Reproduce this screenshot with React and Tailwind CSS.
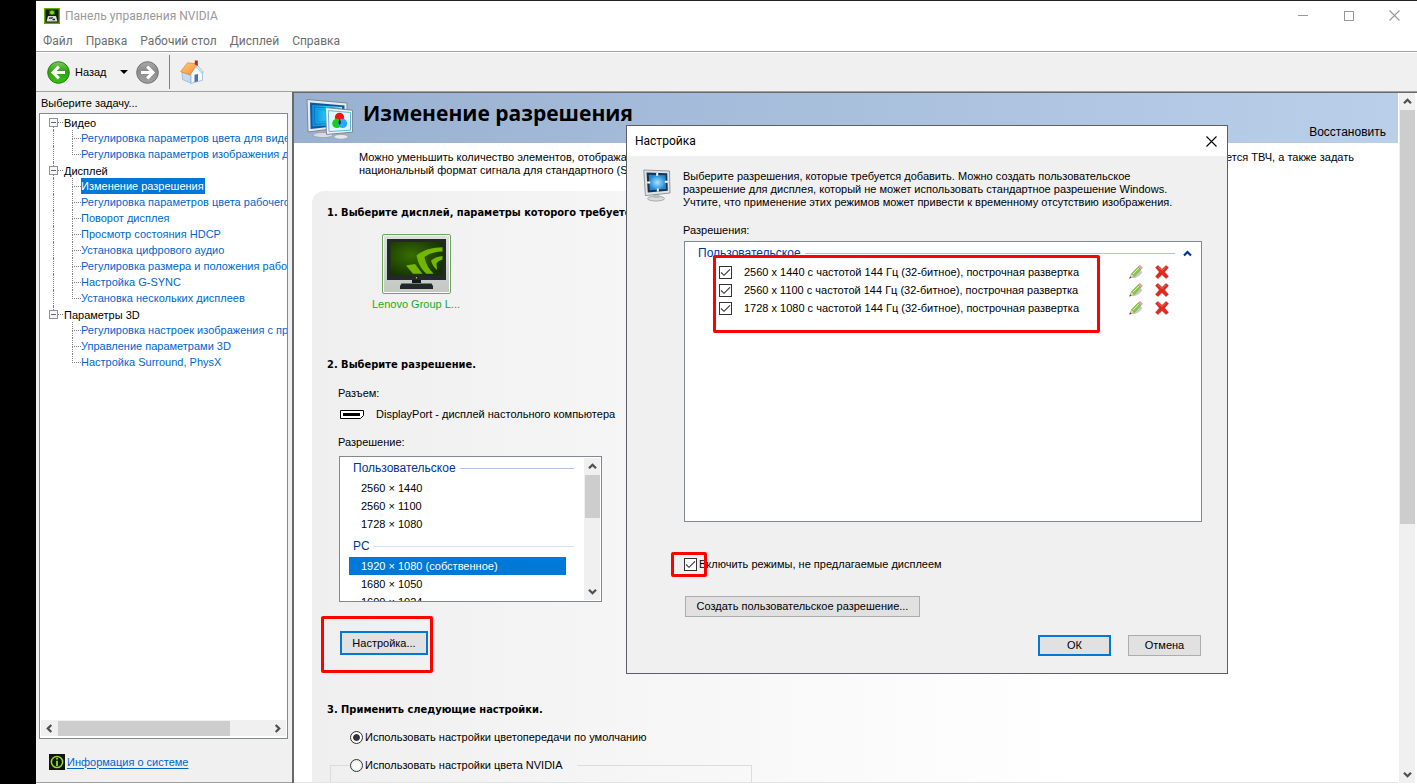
import React from "react";

const ui = "font-['Liberation_Sans',Arial,sans-serif]";
const bold = "font-['DejaVu_Sans_Condensed','DejaVu_Sans',sans-serif] font-bold";
const chrome = "font-['Roboto','Liberation_Sans',sans-serif]";

const tree = [
  {
    name: "Видео",
    items: ["Регулировка параметров цвета для видео", "Регулировка параметров изображения для видео"],
  },
  {
    name: "Дисплей",
    items: [
      "Изменение разрешения",
      "Регулировка параметров цвета рабочего стола",
      "Поворот дисплея",
      "Просмотр состояния HDCP",
      "Установка цифрового аудио",
      "Регулировка размера и положения рабочего стола",
      "Настройка G-SYNC",
      "Установка нескольких дисплеев",
    ],
  },
  {
    name: "Параметры 3D",
    items: [
      "Регулировка настроек изображения с просмотром",
      "Управление параметрами 3D",
      "Настройка Surround, PhysX",
    ],
  },
];

const modes = [
  "2560 x 1440 с частотой 144 Гц (32-битное), построчная развертка",
  "2560 x 1100 с частотой 144 Гц (32-битное), построчная развертка",
  "1728 x 1080 с частотой 144 Гц (32-битное), построчная развертка",
];

function Chevron({ className = "" }) {
  return (
    <svg viewBox="0 0 9 9" className={"size-[9px] " + className} fill="none" stroke="#505050" strokeWidth="2.3">
      <path d="M1 6.3 4.5 2.8 8 6.3" />
    </svg>
  );
}

function CloseIcon({ color }) {
  return (
    <svg viewBox="0 0 11 11" className="size-[11px]" stroke={color} strokeWidth="1.1">
      <path d="M.5.5l10 10M10.5.5l-10 10" />
    </svg>
  );
}

function AppIcon() {
  return (
    <svg viewBox="0 0 16 16" className="size-4 shrink-0">
      <rect x=".7" y=".7" width="14.6" height="14.6" fill="#161a12" stroke="#5fae00" strokeWidth="1.4" />
      <path d="M5 2.5h6v4.2H5z" fill="#2f6a08" />
      <circle cx="8" cy="4.400" r="2" fill="#7be01a" />
      <path d="M4 8h8l1.500 5.500h-11z" fill="#d8dcd8" />
      <path d="M5 10.200h2.500l1-1M8.500 11.500H11" fill="none" stroke="#222" strokeWidth="1.300" />
    </svg>
  );
}

function RoundArrow({ back }) {
  const id = back ? "arrowGreen" : "arrowGray";
  return (
    <svg viewBox="0 0 23 23" className="size-[23px]">
      <defs>
        <linearGradient id={id} x1="0" y1="0" x2="0" y2="1">
          <stop offset="0" stopColor={back ? "#7ccb5e" : "#a9a9a9"} />
          <stop offset=".45" stopColor={back ? "#2fa014" : "#8b8b8b"} />
          <stop offset="1" stopColor={back ? "#39c30f" : "#a3a3a3"} />
        </linearGradient>
      </defs>
      <circle cx="11.5" cy="11.5" r="10.8" fill={`url(#${id})`} stroke={back ? "#1f8210" : "#707070"} strokeWidth="1" />
      {back ? (
        <path d="M18 11.5H7M11.8 5.6 6 11.500 11.8 17.400" fill="none" stroke="#fff" strokeWidth="3" />
      ) : (
        <path d="M5 11.500h11M11.200 5.600l5.800 5.900-5.800 5.900" fill="none" stroke="#fff" strokeWidth="3" />
      )}
    </svg>
  );
}

function House() {
  return (
    <svg viewBox="0 0 24 24" className="size-6">
      <defs>
        <linearGradient id="roof" x1="0" y1="0" x2="1" y2="1">
          <stop offset="0" stopColor="#ffd08a" />
          <stop offset="1" stopColor="#f28c22" />
        </linearGradient>
      </defs>
      <path d="M2 12 11 14v9.200L2.500 19.500z" fill="#c3dcf3" stroke="#8fb0d2" strokeWidth=".7" />
      <path d="M11 13.500 17 5.500l5.500 7.500v7.300L11 23.300z" fill="#f3f8fd" stroke="#94aeca" strokeWidth=".7" />
      <path d="M14.500 14.800l3.500-.9v7.300l-3.500 1z" fill="#4a70b5" />
      <path d="M16.500 4 23.400 12.200 22 13.300 16.600 7.300z" fill="#dbe9f6" stroke="#8ca8c6" strokeWidth=".6" />
      <path d="M7.500 2.800 16.800 3.800 10 15 .6 11.600z" fill="url(#roof)" stroke="#dd8426" strokeWidth=".7" />
      <path d="M14.800.4h3V6l-3-1.800z" fill="#b8281c" />
    </svg>
  );
}

function ResolutionIcon() {
  return (
    <svg viewBox="0 0 48 42" className="h-[42px] w-12 shrink-0">
      <defs>
        <linearGradient id="scr" x1="0" y1="0" x2="1" y2="0">
          <stop offset="0" stopColor="#1287da" />
          <stop offset=".5" stopColor="#22cdf4" />
          <stop offset="1" stopColor="#8ff0fc" />
        </linearGradient>
      </defs>
      <ellipse cx="17" cy="37" rx="10" ry="2.6" fill="#d5dbe0" stroke="#8f979e" strokeWidth=".6" />
      <path d="M1 1.500 41 5v24L2 34z" fill="#e6eaed" stroke="#7f8890" strokeWidth="1" />
      <path d="M4 4.500 38.500 7.400v19.800L4.600 31z" fill="#0b5a9e" />
      <path d="M6 7 36 9v17L6.400 28.600z" fill="url(#scr)" />
      <path d="M8.500 9 34 10.500v14L8.800 26.500z" fill="none" stroke="#0a78c4" strokeWidth="1" />
      <path d="M11.500 11.500 30 12.500v10.500L11.800 24z" fill="none" stroke="#0f9ade" strokeWidth="1" />
      <ellipse cx="35" cy="38.800" rx="7" ry="2.400" fill="#e3e7ea" stroke="#8f979e" strokeWidth=".6" />
      <path d="M19.500 9.600 46.500 12.200v22L20.500 36.400z" fill="#f0f3f5" stroke="#7f8890" strokeWidth="1" />
      <path d="M22.300 12.600 44.500 14.500v17.600L23 33.600z" fill="#e2f6fd" stroke="#59b9e0" strokeWidth="1" />
      <circle cx="33.500" cy="19.300" r="4.600" fill="#f31212" />
      <circle cx="30.800" cy="25.400" r="4.600" fill="#12d312" />
      <circle cx="36.600" cy="25.400" r="4.600" fill="#28a8ff" />
      <path d="M33.700 21.200c1.600 1.700 1.600 4.200 0 5.700-1.600-1.500-1.600-4 0-5.700z" fill="#222" />
    </svg>
  );
}

function MonitorIcon() {
  return (
    <svg viewBox="0 0 28 33" className="h-[33px] w-7">
      <defs>
        <radialGradient id="mon">
          <stop offset="0" stopColor="#a6e4ff" />
          <stop offset="1" stopColor="#2186d0" />
        </radialGradient>
      </defs>
      <ellipse cx="13" cy="29.600" rx="8.500" ry="2.400" fill="#d8dcdf" stroke="#969da2" strokeWidth=".8" />
      <path d="M10.500 24h6v5h-6z" fill="#b8bec2" />
      <path d="M.8 1 26.500 2 27 24 2.400 26.600z" fill="#dfe3e6" stroke="#899097" strokeWidth=".9" />
      <path d="M3.500 3.600 24.200 4.200 24.800 21.800 4.800 23.400z" fill="#17344f" />
      <path d="M5.800 5.800 22.600 6.200 23 20 6.800 21.200z" fill="url(#mon)" />
      <path d="M14.200 3.800v3M14.800 19.600v3M4.200 13.400h3M21.800 12.800h3" stroke="#fff" strokeWidth="2" />
    </svg>
  );
}

function DisplayThumb() {
  return (
    <svg viewBox="0 0 59 50" className="h-[50px] w-[59px]">
      <defs>
        <radialGradient id="green" cx=".4" cy=".4" r=".7">
          <stop offset="0" stopColor="#376e00" />
          <stop offset="1" stopColor="#143000" />
        </radialGradient>
        <clipPath id="screenClip">
          <path d="M3.500 3h52v33.500h-52z" />
        </clipPath>
      </defs>
      <path d="M25 40h9v4h-9z" fill="#14181a" />
      <path d="M14.500 44.500h30l1.500 2.500v3H13v-3z" fill="#23282b" />
      <rect width="59" height="41" fill="#23282b" />
      <rect x="3.500" y="3" width="52" height="33.500" fill="url(#green)" />
      <g clipPath="url(#screenClip)" fill="#74b600">
        <path d="M19 26.500 28 25l7.500 9.800h-9.500z" />
        <path d="M29.500 16.600C36 11 45 8.300 56 8.300v4.200c-8 .2-14 2-18.600 5.600 1.500 7 4.500 12.500 9.300 16.700h-7.400C33.800 30 31 24 29.500 16.600z" />
        <path d="M44 21.500c3.400-2.800 7.200-4.200 12-4.500v3.500c-3 .6-5 1.800-6.500 4l.5 6.500c-3.200-2.600-5-5.500-6-9.500z" />
      </g>
      <circle cx="29.500" cy="38.800" r=".7" fill="#e8e000" />
    </svg>
  );
}

function Pencil() {
  return (
    <svg viewBox="0 0 14 14" className="size-[14px]">
      <path d="M3 13c4 .5 8-2 10.500-6L11 5z" fill="#c9c9c9" />
      <path d="M2.600 8.600 9 2l2.800 2.600-6.500 6.800z" fill="#86cc48" stroke="#5b9a2c" strokeWidth=".5" />
      <path d="M3.600 9.400 10 3" stroke="#d2f2a8" strokeWidth="1" />
      <path d="M9 2 10.800.3l2.700 2.500-1.700 1.800z" fill="#f0a9a0" stroke="#b3776c" strokeWidth=".5" />
      <path d="M2.600 8.600 5.300 11.400.6 13.200z" fill="#f1d7a2" stroke="#9a8455" strokeWidth=".5" />
      <path d="M.4 13.400 1.200 11.400 2.400 12.600z" fill="#333" />
    </svg>
  );
}

function RedCross() {
  return (
    <svg viewBox="0 0 14 14" className="size-[14px]">
      <path
        d="M3 .6 7 4.400 11 .6l2.400 2L9.600 7l3.800 4.400-2.400 2L7 9.600l-4 3.800-2.400-2L4.400 7 .6 2.600z"
        fill="#e4281d"
        stroke="#b8211a"
        strokeWidth=".6"
      />
      <path d="M3 1.800 7 5.600l4-3.800" fill="none" stroke="#f4786c" strokeWidth=".7" />
    </svg>
  );
}

function Tick({ id }) {
  return (
    <span className="grid size-[13px] shrink-0">
      <input
        id={id}
        type="checkbox"
        defaultChecked
        className="peer col-start-1 row-start-1 size-[13px] appearance-none border border-[#333] bg-white"
      />
      <svg
        viewBox="0 0 13 13"
        className="pointer-events-none invisible col-start-1 row-start-1 size-[13px] peer-checked:visible"
        fill="none"
        stroke="#333"
        strokeWidth="1.1"
      >
        <path d="M2 6.500 5 9.300l6-6" />
      </svg>
    </span>
  );
}

function Radio({ id, checked }) {
  return (
    <input
      id={id}
      type="radio"
      name="color"
      defaultChecked={checked}
      className="size-[13px] shrink-0 appearance-none rounded-full border border-[#333] bg-white bg-clip-content p-0.5 checked:bg-[#333] checked:shadow-[inset_0_0_0_2px_white]"
    />
  );
}

function TreeGroup({ group, first, last }) {
  return (
    <li>
      <div className="flex h-4 pl-[9px]">
        <span className="flex w-[9px] shrink-0 flex-col items-center">
          <span className={"h-1 border-l border-dotted " + (first ? "border-transparent" : "border-[#808080]")} />
          <button
            type="button"
            aria-label={"Свернуть " + group.name}
            className="flex size-[9px] shrink-0 items-center justify-center border border-[#919191] bg-[#f7f7f7]"
          >
            <span className="h-px w-[5px] bg-[#4b63a7]" />
          </button>
          <span className={"h-[3px] border-l border-dotted " + (last ? "border-transparent" : "border-[#808080]")} />
        </span>
        <span className="h-[9px] w-[5px] shrink-0 border-b border-dotted border-[#808080]" />
        <span className="pl-px leading-[18px]">{group.name}</span>
      </div>
      <ul>
        {group.items.map((item, i) => (
          <li key={item} className="flex h-4 pl-[13px]">
            <span
              className={"w-[19px] shrink-0 border-l border-dotted " + (last ? "border-transparent" : "border-[#808080]")}
            />
            <span className="flex w-[9px] shrink-0 flex-col">
              <span className="h-[9px] border-b border-l border-dotted border-[#808080]" />
              {i < group.items.length - 1 && (
                <span className="h-[7px] border-l border-dotted border-[#808080]" />
              )}
            </span>
            <a
              href="#resolution"
              className={
                "leading-4 whitespace-nowrap " +
                (item === "Изменение разрешения" ? "bg-[#0078d7] pr-px text-white" : "text-[#0066cc]")
              }
            >
              {item}
            </a>
          </li>
        ))}
      </ul>
    </li>
  );
}

function Sidebar() {
  return (
    <aside className={"flex w-64 shrink-0 flex-col border-b border-[#a0a0a0] bg-[#f0f0f0] pr-1 pl-[3px] text-[11px] " + ui}>
      <p className="mt-px px-0.5 leading-5">Выберите задачу...</p>
      <div className="flex min-h-0 flex-1 flex-col border border-[#828790] bg-white">
        <ul className="min-h-0 flex-1 overflow-hidden">
          {tree.map((g, i) => (
            <TreeGroup key={g.name} group={g} first={i === 0} last={i === tree.length - 1} />
          ))}
        </ul>
        <div className="mx-px mb-0.5 flex h-4 items-center bg-[#f0f0f0]">
          <button type="button" aria-label="Прокрутить влево" className="flex w-[17px] justify-center">
            <Chevron className="-rotate-90" />
          </button>
          <span className="h-[15px] w-[172px] bg-[#cdcdcd]" />
          <button type="button" aria-label="Прокрутить вправо" className="ml-auto flex w-[17px] justify-center">
            <Chevron className="rotate-90" />
          </button>
        </div>
      </div>
      <div className="flex h-[43px] items-center gap-0.5 pt-[3px] pl-[10px]">
        <svg viewBox="0 0 16 16" className="size-4">
          <rect width="16" height="16" fill="#11150c" />
          <circle cx="8" cy="8" r="5.600" fill="none" stroke="#8fdc2c" strokeWidth="1.500" />
          <path d="M8 4v1.600M8 6.800V12" stroke="#8fdc2c" strokeWidth="1.800" />
        </svg>
        <a href="#info" className="text-[#0066cc] underline underline-offset-2">
          Информация о системе
        </a>
      </div>
    </aside>
  );
}

function GroupTitle({ children, line }) {
  return (
    <div className="flex items-center gap-1 text-xs leading-4 text-[#003399]">
      {children}
      <span className={"h-px flex-1 " + line} />
    </div>
  );
}

function ResolutionList() {
  const row = "flex h-[18px] items-center pl-3";
  return (
    <div className="mt-[6px] ml-3 flex h-[146px] w-[263px] border border-[#828790] bg-white">
      <div className="min-w-0 flex-1 overflow-hidden pt-[3px] pr-[10px] pl-[9px]">
        <div className="pl-1">
          <GroupTitle line="bg-[#b0c4e0]">Пользовательское</GroupTitle>
        </div>
        <ul role="listbox" aria-label="Пользовательское" className="my-[3px]">
          {["2560 × 1440", "2560 × 1100", "1728 × 1080"].map((r) => (
            <li key={r} role="option" aria-selected="false" className={row}>
              {r}
            </li>
          ))}
        </ul>
        <div className="pt-0.5 pl-1">
          <GroupTitle line="bg-[#d8dff0]">PC</GroupTitle>
        </div>
        <ul role="listbox" aria-label="PC" className="mt-[3px] mr-2">
          <li role="option" aria-selected="true" className={row + " bg-[#0078d7] text-white"}>
            1920 × 1080 (собственное)
          </li>
          <li role="option" aria-selected="false" className={row}>
            1680 × 1050
          </li>
          <li role="option" aria-selected="false" className={row}>
            1600 × 1024
          </li>
        </ul>
      </div>
      <div className="my-px mr-px flex w-4 flex-col items-center bg-[#f0f0f0]">
        <button type="button" aria-label="Вверх" className="flex h-[17px] items-center">
          <Chevron />
        </button>
        <span className="h-[43px] w-[15px] bg-[#cdcdcd]" />
        <button type="button" aria-label="Вниз" className="mt-auto flex h-[17px] items-center">
          <Chevron className="rotate-180" />
        </button>
      </div>
    </div>
  );
}

function Main() {
  return (
    <main className={"flex min-w-0 flex-1 border-t border-l-2 border-[#696969] bg-white text-[11px] " + ui}>
      <div className="flex min-w-0 flex-1 flex-col overflow-hidden border-b border-[#e3e3e3]">
        <header className="flex h-[50px] shrink-0 bg-linear-to-r from-[#99b1d0] to-[#b9cfea] px-3">
          <div className="pt-[5px]">
            <ResolutionIcon />
          </div>
          <h1 className="ml-[9px] font-['Open_Sans','Noto_Sans',sans-serif] text-[21px] leading-[40px] font-bold">
            Изменение разрешения
          </h1>
          <button type="button" className="mb-[3px] ml-auto self-end text-xs leading-4">
            Восстановить
          </button>
        </header>
        <div className="flex shrink-0 justify-between pt-2 pr-11 pl-[65px] leading-[13px]">
          <p>
            Можно уменьшить количество элементов, отображаемых
            <br />
            национальный формат сигнала для стандартного (SDTV)
          </p>
          <p>используется ТВЧ, а также задать</p>
        </div>
        <section className="mt-[14px] ml-[18px] min-h-0 flex-1 overflow-hidden rounded-tl-xl bg-linear-to-r from-[#efefef] to-white to-70% pl-[15px]">
          <h2 className={"pt-[14px] leading-4 " + bold}>1. Выберите дисплей, параметры которого требуется изменить.</h2>
          <div className="mt-[13px] ml-[43px] flex w-[92px] flex-col items-center">
            <button
              type="button"
              aria-label="Lenovo Group L..."
              className="flex h-[60px] w-[69px] items-center justify-center rounded-xs border border-[#6fa45f] bg-linear-to-b from-[#dde1dd] to-[#c2c8c2] shadow-[inset_0_0_0_1px_white]"
            >
              <DisplayThumb />
            </button>
            <span className="mt-0.5 leading-4 whitespace-nowrap text-[#12b012]">Lenovo Group L...</span>
          </div>
          <h2 className={"mt-[45px] leading-4 " + bold}>2. Выберите разрешение.</h2>
          <p className="mt-3 ml-[11px] leading-4">Разъем:</p>
          <div className="mt-[5px] ml-[13px] flex items-center gap-3 leading-4">
            <svg viewBox="0 0 24 9" className="h-[9px] w-6" fill="none" stroke="#000">
              <path d="M.5.5h23v5l-3 3H.5z" fill="#fff" />
              <path d="M3 4.500h17" strokeWidth="3" />
            </svg>
            DisplayPort - дисплей настольного компьютера
          </div>
          <p className="mt-3 ml-[11px] leading-4">Разрешение:</p>
          <ResolutionList />
          <div className="relative mt-[29px] ml-[13px] w-[88px]">
            <button type="button" className="h-6 w-full border-2 border-[#0078d7] bg-[#e1e1e1]">
              Настройка...
            </button>
            <span className="pointer-events-none absolute -top-[15px] -left-[19px] h-[57px] w-28 rounded-xs border-3 border-[#ff0000]" />
          </div>
          <h2 className={"mt-[47px] leading-4 " + bold}>3. Применить следующие настройки.</h2>
          <div className="mt-[11px] ml-[23px] flex items-center gap-0.5 leading-4">
            <Radio id="default-color" checked />
            <label htmlFor="default-color">Использовать настройки цветопередачи по умолчанию</label>
          </div>
          <fieldset className="mt-3 ml-[3px] h-20 w-[422px] border border-[#dcdcdc] pl-[19px]">
            <legend className="pr-[14px]">
              <span className="flex items-center gap-0.5 leading-4">
                <Radio id="nvidia-color" />
                <label htmlFor="nvidia-color">Использовать настройки цвета NVIDIA</label>
              </span>
            </legend>
          </fieldset>
        </section>
      </div>
      <div className="mr-0.5 ml-px flex w-4 shrink-0 flex-col items-center bg-[#f0f0f0]">
        <button type="button" aria-label="Прокрутить вверх" className="flex h-[17px] items-center">
          <Chevron />
        </button>
        <span className="h-3/5 w-[15px] bg-[#cdcdcd]" />
        <button type="button" aria-label="Прокрутить вниз" className="mt-auto flex h-[17px] items-center">
          <Chevron className="rotate-180" />
        </button>
      </div>
    </main>
  );
}

function Dialog() {
  const plain = "h-[21px] border border-[#adadad] bg-[#e1e1e1]";
  return (
    <div
      role="dialog"
      aria-label="Настройка"
      className={"absolute top-[125px] left-[626px] w-[602px] border border-[#5c6066] bg-[#f0f0f0] text-[11px] " + ui}
    >
      <div className={"flex h-[30px] items-center justify-between bg-white pr-[10px] pl-2 text-xs " + chrome}>
        Настройка
        <button type="button" aria-label="Закрыть">
          <CloseIcon color="#000" />
        </button>
      </div>
      <div className="flex gap-3 pt-[13px] pr-[25px] pb-[17px] pl-4">
        <MonitorIcon />
        <div className="min-w-0 flex-1">
          <p className="pt-px leading-[13px]">
            Выберите разрешения, которые требуется добавить. Можно создать пользовательское
            <br />
            разрешение для дисплея, который не может использовать стандартное разрешение Windows.
            <br />
            Учтите, что применение этих режимов может привести к временному отсутствию изображения.
          </p>
          <p className="mt-[13px] leading-4">Разрешения:</p>
          <div className="mt-[3px] ml-px h-[281px] border border-[#828790] bg-white pt-[3px]">
            <div className="flex items-center gap-2 pr-[9px] pl-[13px]">
              <div className="flex-1">
                <GroupTitle line="bg-[#b0c4e0]">Пользовательское</GroupTitle>
              </div>
              <button type="button" aria-label="Свернуть">
                <svg viewBox="0 0 9 9" className="size-[9px]" fill="none" stroke="#003399" strokeWidth="2.200">
                  <path d="M1 6.500 4.500 3 8 6.500" />
                </svg>
              </button>
            </div>
            <ul className="mt-0.5">
              {modes.map((m, i) => (
                <li key={m} className="flex h-[18px] items-center pr-8 pl-[34px]">
                  <Tick id={"mode" + i} />
                  <label htmlFor={"mode" + i} className="ml-3 flex-1">
                    {m}
                  </label>
                  <button type="button" aria-label="Изменить">
                    <Pencil />
                  </button>
                  <button type="button" aria-label="Удалить" className="ml-3">
                    <RedCross />
                  </button>
                </li>
              ))}
            </ul>
          </div>
          <div className="mt-[34px] ml-px flex items-center gap-0.5 leading-4">
            <Tick id="extra" />
            <label htmlFor="extra">Включить режимы, не предлагаемые дисплеем</label>
          </div>
          <button type="button" className={"mt-6 ml-0.5 block w-[235px] " + plain}>
            Создать пользовательское разрешение...
          </button>
          <div className="mt-[18px] mr-px flex justify-end gap-[17px]">
            <button type="button" className="h-[21px] w-[73px] border-2 border-[#0078d7] bg-[#e1e1e1]">
              ОК
            </button>
            <button type="button" className={"w-[73px] " + plain}>
              Отмена
            </button>
          </div>
        </div>
      </div>
      <span className="pointer-events-none absolute top-[129px] left-[86px] h-[78px] w-[387px] rounded-xs border-3 border-[#ff0000]" />
      <span className="pointer-events-none absolute top-[426px] left-11 h-[25px] w-9 rounded-xs border-3 border-[#ff0000]" />
    </div>
  );
}

export default function App() {
  return (
    <div className="relative flex h-screen overflow-hidden bg-white text-black">
      <div className="w-9 shrink-0 bg-black" />
      <div className="flex min-w-0 flex-1 flex-col border-t border-[#222] bg-white">
        <div className={"flex h-[29px] shrink-0 items-center pl-2 text-xs text-[#999] " + chrome}>
          <AppIcon />
          <span className="ml-[5px]">Панель управления NVIDIA</span>
          <button type="button" aria-label="Свернуть" className="ml-auto flex h-full w-[46px] items-center justify-center">
            <span className="h-px w-[10px] bg-[#999]" />
          </button>
          <button type="button" aria-label="Развернуть" className="flex h-full w-[45px] items-center justify-center">
            <span className="size-[10px] border border-[#999]" />
          </button>
          <button type="button" aria-label="Закрыть" className="flex h-full w-[46px] items-center justify-center">
            <CloseIcon color="#999" />
          </button>
        </div>
        <nav
          className={
            "flex h-[22px] shrink-0 gap-[13px] border-b border-[#a0a0a0] pl-[7px] text-xs leading-[22px] text-[#6d6d6d] " +
            chrome
          }
        >
          {["Файл", "Правка", "Рабочий стол", "Дисплей", "Справка"].map((m) => (
            <button key={m} type="button">
              {m}
            </button>
          ))}
        </nav>
        <div
          className={"flex h-10 shrink-0 items-center border-t border-b border-t-white border-b-[#a0a0a0] bg-[#f0f0f0] pl-[11px] text-[11px] " + ui}
        >
          <button type="button" className="flex items-center gap-[5px]">
            <RoundArrow back />
            Назад
          </button>
          <button type="button" aria-label="История" className="ml-[13px]">
            <svg viewBox="0 0 8 4" className="h-1 w-2">
              <path d="M0 0h8L4 4z" />
            </svg>
          </button>
          <button type="button" aria-label="Вперед" className="ml-2">
            <RoundArrow />
          </button>
          <span className="mx-[10px] h-[34px] w-px bg-[#808080]" />
          <button type="button" aria-label="Домой">
            <House />
          </button>
        </div>
        <div className="mb-px flex min-h-0 flex-1">
          <Sidebar />
          <Main />
        </div>
      </div>
      <Dialog />
    </div>
  );
}
